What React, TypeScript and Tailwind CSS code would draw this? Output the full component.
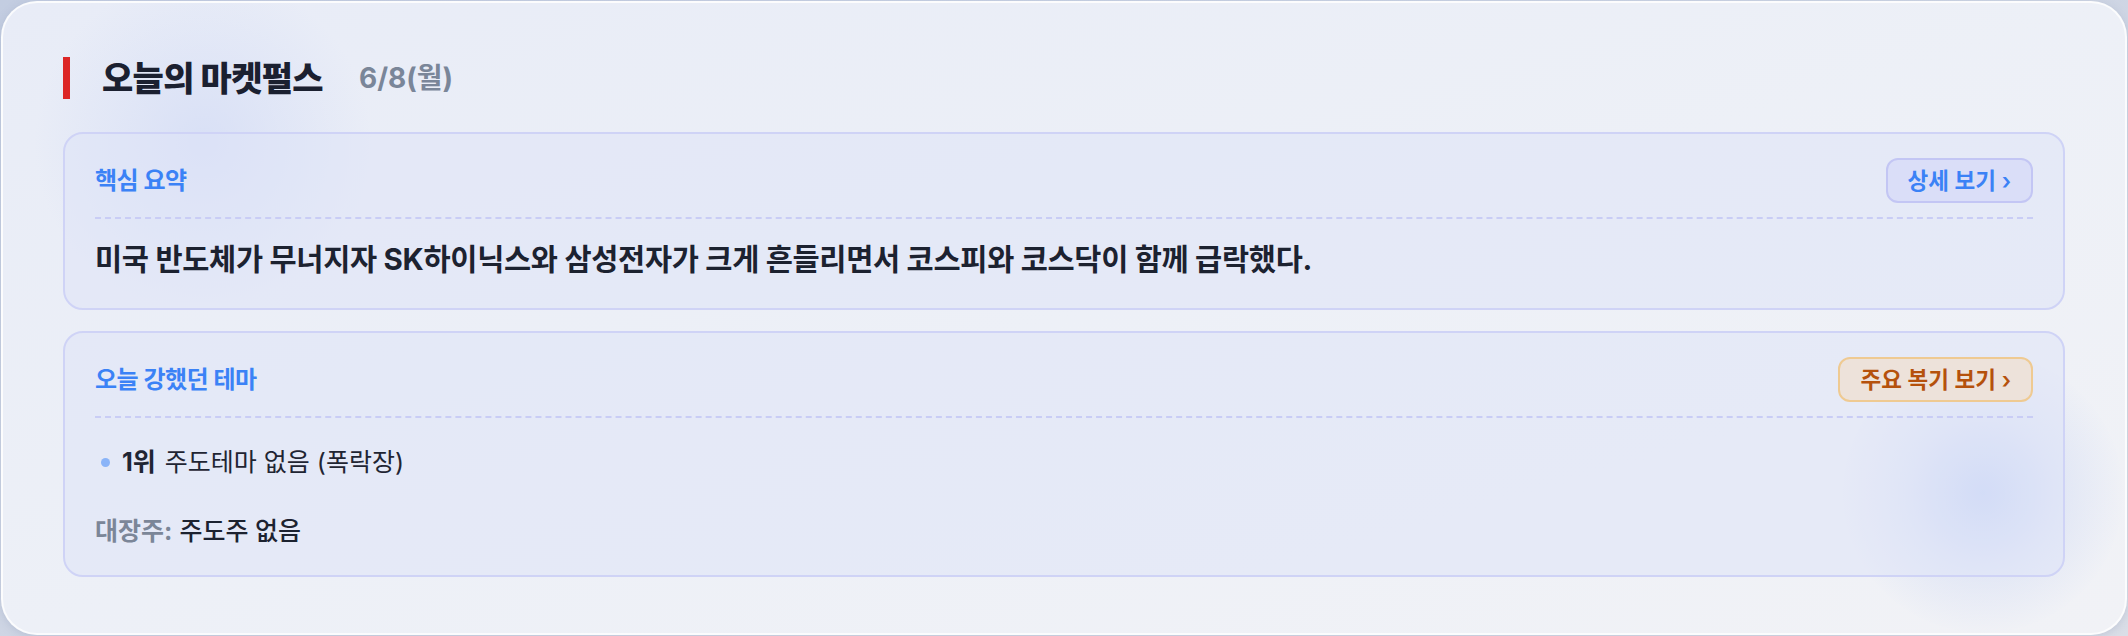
import React from "react";

const FONT = { fontFamily: 'Inter, "Noto Sans CJK KR", "Noto Sans", sans-serif' };

function SectionCard({
  title,
  button,
  buttonClass,
  pb,
  children,
}: {
  title: string;
  button: string;
  buttonClass: string;
  pb: string;
  children: React.ReactNode;
}) {
  return (
    <div className={`relative z-10 rounded-[20px] border-2 border-[#cfd3f6] bg-[rgba(222,228,248,0.55)] px-[30px] pt-[24px] ${pb}`}>
      <div className="flex items-center justify-between">
        <h2 className="text-[24px] font-bold tracking-[-0.02em] text-[#3b82f6]">{title}</h2>
        <button
          className={`flex h-[45px] items-center rounded-[12px] border-2 px-[20px] text-[22.5px] font-semibold ${buttonClass}`}
        >
          {button}
        </button>
      </div>
      <div className="mt-[14px] border-t-2 border-dashed border-[#c9cdf5]" />
      {children}
    </div>
  );
}

export default function App() {
  return (
    <div
      className="h-[636px] w-full bg-gradient-to-br from-[#c3cde1] to-[#dadee7] p-[1px]"
      style={FONT}
    >
      <div className="relative h-[634px] overflow-hidden rounded-[36px] border-2 border-white/80 bg-gradient-to-br from-[#e8ecf7] via-[#edf0f7] to-[#f1f2f6] px-[60px] pt-[54px] pb-[58px] shadow-[0_2px_8px_rgba(120,135,170,0.25)]">
        <div className="pointer-events-none absolute left-[20px] top-[-20px] h-[320px] w-[360px] rounded-full bg-[radial-gradient(circle,rgba(205,215,245,0.6)_0%,rgba(205,215,245,0)_70%)]" />
        <div className="pointer-events-none absolute left-[1840px] top-[350px] h-[280px] w-[280px] rounded-full bg-[radial-gradient(circle,rgba(190,206,244,0.85)_0%,rgba(200,212,244,0.35)_40%,rgba(220,226,244,0)_72%)]" />

        <div className="relative z-10 flex h-[42px] items-center">
          <span className="h-[42px] w-[7px] bg-[#dc2626]" />
          <h1 className="ml-[32px] text-[34px] font-extrabold tracking-[-0.02em] text-[#1b2030]">
            오늘의 마켓펄스
          </h1>
          <span className="ml-[36px] text-[28px] font-bold text-[#7a8699]">6/8(월)</span>
        </div>

        <div className="mt-[33px] flex flex-col gap-[21px]">
          <SectionCard
            title="핵심 요약"
            button="상세 보기 ›"
            buttonClass="border-[#c3c6f4] bg-[#dadef8] text-[#3b82f6]"
            pb="pb-[28px]"
          >
            <p className="mt-[20px] text-[29.5px] font-bold leading-[1.4] tracking-[-0.01em] text-[#1c2230]">
              미국 반도체가 무너지자 SK하이닉스와 삼성전자가 크게 흔들리면서 코스피와 코스닥이 함께 급락했다.
            </p>
          </SectionCard>

          <SectionCard
            title="오늘 강했던 테마"
            button="주요 복기 보기 ›"
            buttonClass="border-[#efca92] bg-[#ede2da] text-[#b5510c]"
            pb="pb-[26px]"
          >
            <div className="mt-[27px] flex items-center pl-[6px] text-[25px] leading-[1.4] text-[#1f2533]">
              <span className="h-[9px] w-[9px] rounded-full bg-[#8ab4f8]" />
              <span className="ml-[12px] font-bold">1위</span>
              <span className="ml-[9px]">주도테마 없음 (폭락장)</span>
            </div>
            <div className="mt-[34px] text-[25px] leading-[1.4]">
              <span className="font-bold text-[#7b8698]">대장주:</span>{" "}
              <span className="font-medium text-[#1c2230]">주도주 없음</span>
            </div>
          </SectionCard>
        </div>
      </div>
    </div>
  );
}
